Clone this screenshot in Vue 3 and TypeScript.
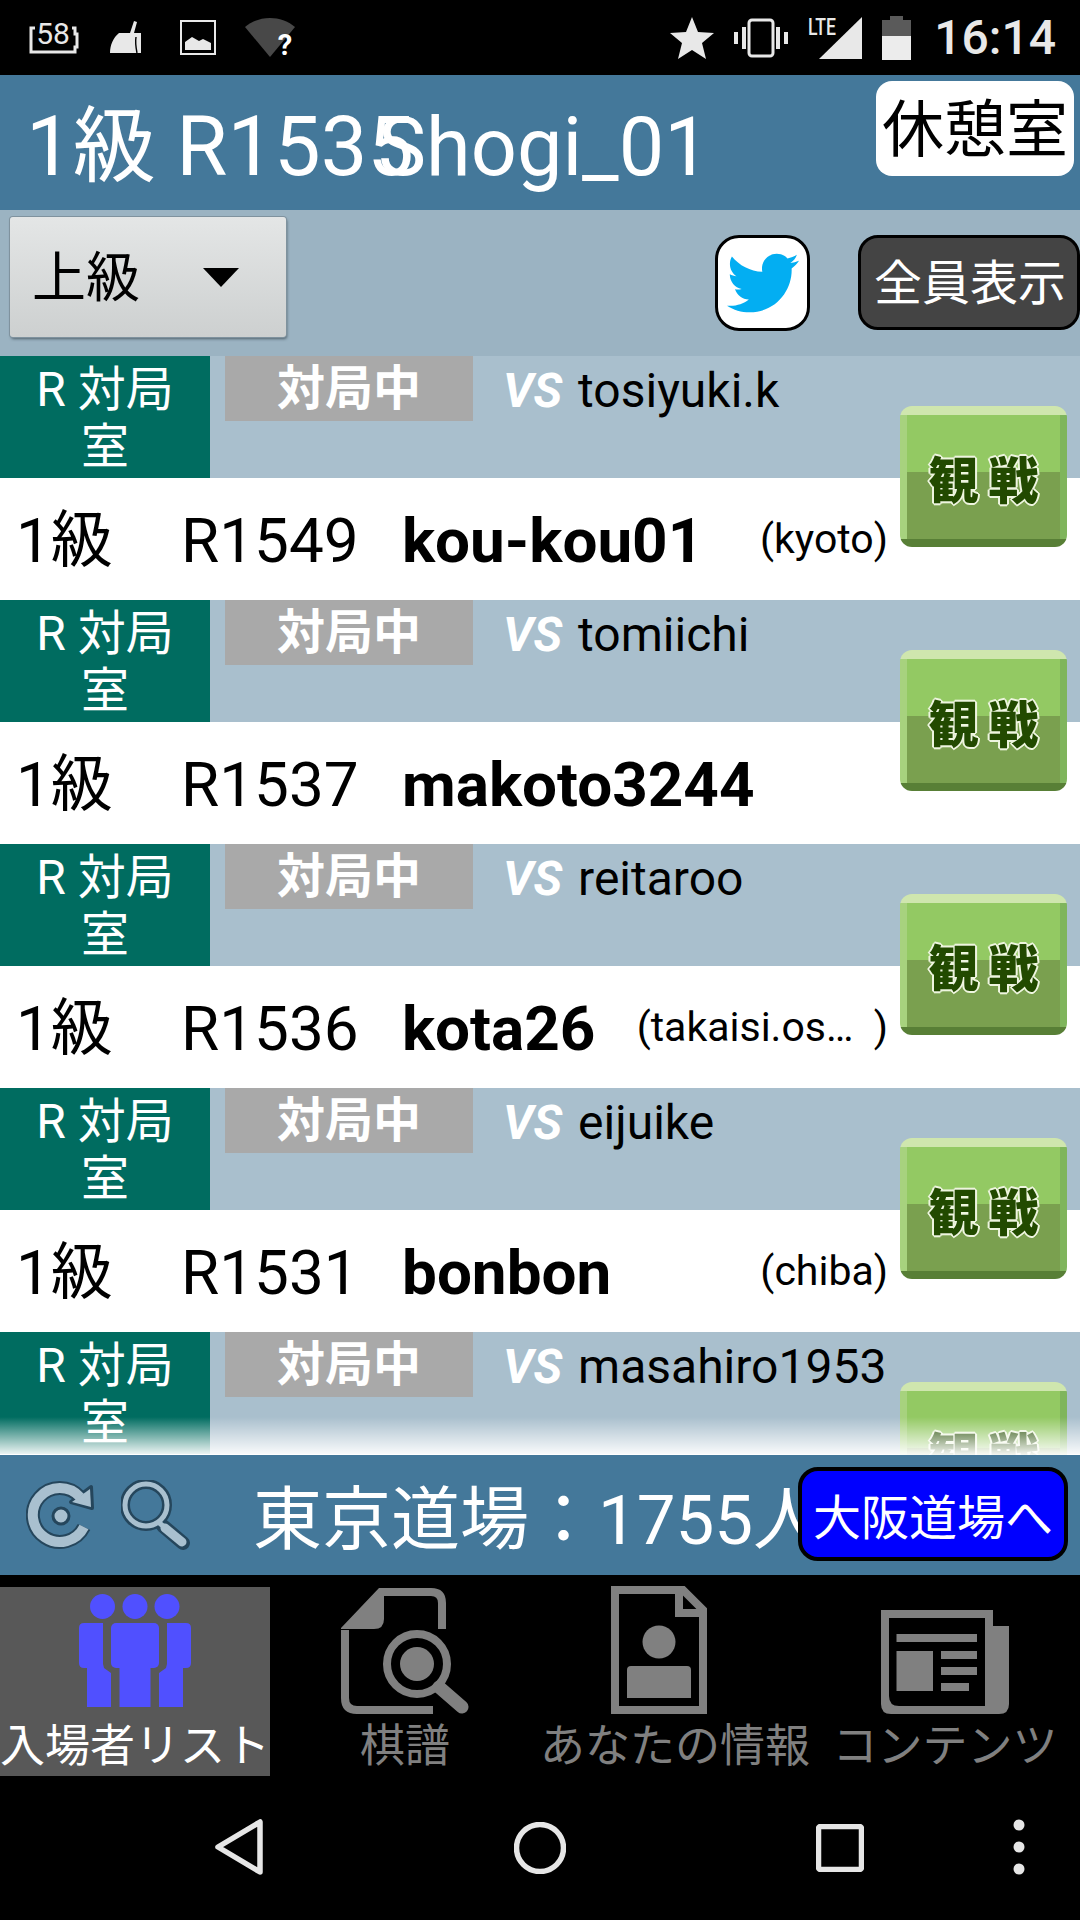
<script setup lang="ts">
interface Player {
  opponent: string
  rank: string
  rating: string
  name: string
  place: string
}

const players: Player[] = [
  { opponent: 'tosiyuki.k', rank: '1級', rating: 'R1549', name: 'kou-kou01', place: '(kyoto)' },
  { opponent: 'tomiichi', rank: '1級', rating: 'R1537', name: 'makoto3244', place: '' },
  { opponent: 'reitaroo', rank: '1級', rating: 'R1536', name: 'kota26', place: '(takaisi.os…  )' },
  { opponent: 'eijuike', rank: '1級', rating: 'R1531', name: 'bonbon', place: '(chiba)' },
  { opponent: 'masahiro1953', rank: '', rating: '', name: '', place: '' },
]
</script>

<template>
  <div class="app">
    <header class="status">
      <div class="status-group left">
        <svg class="st-cam" viewBox="0 0 49 33" width="49" height="33">
          <path d="M6 7H2V31H46V26H48V13H46V7H43" fill="none" stroke="#e8e8e8" stroke-width="3" />
          <text x="24" y="23" text-anchor="middle" class="st-num">58</text>
        </svg>
        <svg class="st-broom" viewBox="0 0 32 33" width="32" height="33">
          <path d="M24 0l3 1-3 11h7v20H0c0-8 3-15 9-20h11z" fill="#e8e8e8" />
          <path d="M27 32c-1-5-2-10-1-16" stroke="#000" stroke-width="1.4" fill="none" />
        </svg>
        <svg class="st-pic" viewBox="0 0 36 35" width="36" height="35">
          <rect x="1" y="1" width="34" height="33" fill="none" stroke="#e8e8e8" stroke-width="2" />
          <path d="M5 30V22l7-5 7 4 4-2 8 4v7z" fill="#e8e8e8" />
        </svg>
        <svg class="st-wifi" viewBox="0 0 50 40" width="50" height="40">
          <path d="M0 9C14-3 36-3 50 9L25 39z" fill="#484848" />
          <text x="40" y="37" text-anchor="middle" class="st-q">?</text>
        </svg>
      </div>
      <div class="status-group right">
        <svg viewBox="0 0 44 42" width="44" height="42">
          <path d="M22 0l6 15 16 1-12 10 4 16-14-9-14 9 4-16L0 16l16-1z" fill="#e8e8e8" />
        </svg>
        <svg viewBox="0 0 54 40" width="54" height="40">
          <rect x="15" y="2" width="24" height="36" rx="3" fill="none" stroke="#e8e8e8" stroke-width="3" />
          <rect x="8" y="9" width="4" height="22" fill="#e8e8e8" />
          <rect x="42" y="9" width="4" height="22" fill="#e8e8e8" />
          <rect x="0" y="14" width="4" height="12" fill="#e8e8e8" />
          <rect x="50" y="14" width="4" height="12" fill="#e8e8e8" />
        </svg>
        <svg viewBox="0 0 54 42" width="54" height="42">
          <text x="0" y="18" class="st-lte" textLength="28" lengthAdjust="spacingAndGlyphs">LTE</text>
          <path d="M54 0V42H11z" fill="#e8e8e8" />
        </svg>
        <svg viewBox="0 0 29 44" width="29" height="44">
          <path d="M8 0h13v4h8v16H0V4h8z" fill="#5a5a5a" />
          <rect x="0" y="20" width="29" height="24" fill="#ececec" />
        </svg>
        <span class="clock">16:14</span>
      </div>
    </header>

    <section class="title-bar">
      <h1 class="title"><span class="title-rank">1級 R1535</span><span class="title-site">Shogi_01</span></h1>
      <button class="lounge">休憩室</button>
    </section>

    <section class="toolbar">
      <div class="select">
        <span>上級</span>
        <i class="caret"></i>
      </div>
      <button class="twitter" aria-label="Twitter">
        <svg viewBox="0 0 24 24" width="72" height="72">
          <path
            fill="#03aef2"
            d="M23.954 4.569c-.885.389-1.83.654-2.825.775 1.014-.611 1.794-1.574 2.163-2.723-.951.555-2.005.959-3.127 1.184-.896-.959-2.173-1.559-3.591-1.559-2.717 0-4.92 2.203-4.92 4.917 0 .39.045.765.127 1.124C7.691 8.094 4.066 6.13 1.64 3.161c-.427.722-.666 1.561-.666 2.475 0 1.71.87 3.213 2.188 4.096-.807-.026-1.566-.248-2.228-.616v.061c0 2.385 1.693 4.374 3.946 4.827-.413.111-.849.171-1.296.171-.314 0-.615-.03-.916-.086.631 1.953 2.445 3.377 4.604 3.417-1.68 1.319-3.809 2.105-6.102 2.105-.39 0-.779-.023-1.17-.067 2.189 1.394 4.768 2.209 7.557 2.209 9.054 0 13.999-7.496 13.999-13.986 0-.209 0-.42-.015-.63.961-.689 1.8-1.56 2.46-2.548l-.047-.02z"
          />
        </svg>
      </button>
      <button class="show-all">全員表示</button>
    </section>

    <main class="list">
      <article v-for="p in players" :key="p.opponent" class="row">
        <div class="row-top">
          <div class="room">R 対局<br />室</div>
          <div class="state">対局中</div>
          <div class="versus"><b>VS</b><span>{{ p.opponent }}</span></div>
        </div>
        <div class="row-bottom">
          <span class="rank">{{ p.rank }}</span>
          <span class="rating">{{ p.rating }}</span>
          <span class="name">{{ p.name }}</span>
          <span class="place">{{ p.place }}</span>
        </div>
        <button class="watch"><span>観戦</span></button>
      </article>
      <div class="fade"></div>
    </main>

    <section class="dojo">
      <svg class="dojo-icon" viewBox="0 0 70 71" width="70" height="71">
        <path d="M54 17A27 27 0 1 0 58 47" fill="none" stroke="#25465c" stroke-width="14" />
        <path d="M45 22L65 7 66 28z" fill="#a9c0cf" stroke="#25465c" stroke-width="4" stroke-linejoin="round" />
        <path d="M54 17A27 27 0 1 0 58 47" fill="none" stroke="#a9c0cf" stroke-width="10" />
        <path d="M46 22L64 9 65 27z" fill="#a9c0cf" />
        <circle cx="35" cy="36" r="8" fill="#a9c0cf" stroke="#25465c" stroke-width="3" />
      </svg>
      <svg class="dojo-icon second" viewBox="0 0 70 71" width="70" height="71">
        <path d="M42 46L62 63" stroke="#25465c" stroke-width="14" stroke-linecap="round" />
        <circle cx="25" cy="25" r="21" fill="none" stroke="#25465c" stroke-width="10" />
        <circle cx="25" cy="25" r="21" fill="none" stroke="#a9c0cf" stroke-width="5" />
        <path d="M36 41L42 46" stroke="#a9c0cf" stroke-width="5" />
        <path d="M44 48L61 62" stroke="#a9c0cf" stroke-width="9" stroke-linecap="round" />
      </svg>
      <div class="dojo-count">東京道場：1755人</div>
      <button class="dojo-link">大阪道場へ</button>
    </section>

    <nav class="tabs">
      <div class="tab active">
        <svg viewBox="0 0 112 113" width="112" height="113" fill="#5050ff">
          <circle cx="23.5" cy="12.5" r="12.5" />
          <circle cx="56" cy="12.5" r="12.5" />
          <circle cx="88" cy="12.5" r="12.5" />
          <rect x="32" y="29" width="48" height="45" rx="5" />
          <rect x="40.5" y="60" width="31" height="53" />
          <path d="M5 29H24V70L25 74 32 79V113H8V74H5Q0 74 0 69V34Q0 29 5 29Z" />
          <path d="M107 29H88V70L87 74 80 79V113H104V74H107Q112 74 112 69V34Q112 29 107 29Z" />
        </svg>
        <span>入場者リスト</span>
      </div>
      <div class="tab">
        <svg viewBox="0 0 128 126" width="128" height="126">
          <path d="M92 122H16Q4 122 4 110V42" fill="none" stroke="#808080" stroke-width="8" />
          <path d="M0 40L38 0H90Q105 0 105 15V41H97V15Q97 8 90 8H43V31Q43 41 33 41H0Z" fill="#808080" />
          <circle cx="76" cy="76" r="30" fill="none" stroke="#808080" stroke-width="8" />
          <circle cx="76" cy="76" r="17" fill="#808080" />
          <path d="M98 99L121 119" stroke="#808080" stroke-width="13" stroke-linecap="round" />
        </svg>
        <span>棋譜</span>
      </div>
      <div class="tab info">
        <svg viewBox="0 0 96 128" width="96" height="128">
          <path d="M4 4H72L92 24V124H4Z" fill="none" stroke="#808080" stroke-width="8" />
          <path d="M64 4H72V23H90V31H64Z" fill="#808080" />
          <circle cx="48" cy="56" r="16.5" fill="#808080" />
          <path d="M20 80H76Q80 80 80 84V112H16V84Q16 80 20 80Z" fill="#808080" />
        </svg>
        <span>あなたの情報</span>
      </div>
      <div class="tab">
        <svg viewBox="0 0 128 104" width="128" height="104">
          <path
            fill="#808080"
            fill-rule="evenodd"
            d="M0 0H112V16H128V94Q128 104 118 104H10Q0 104 0 94ZM8 8V86Q8 96 18 96H104V8Z"
          />
          <path d="M15.5 24H96V32H15.5ZM15.5 41H52V81H15.5ZM60 41H96V49H60ZM60 57H96V65H60ZM60 73H88V81H60Z" fill="#808080" />
        </svg>
        <span>コンテンツ</span>
      </div>
    </nav>

    <footer class="sysnav">
      <svg viewBox="0 0 48 56" width="48" height="56" class="nav-back">
        <path d="M45 3V53L3 28Z" fill="none" stroke="#e6e6e6" stroke-width="5.5" stroke-linejoin="round" />
      </svg>
      <svg viewBox="0 0 52 52" width="52" height="52" class="nav-home">
        <circle cx="26" cy="26" r="23.5" fill="none" stroke="#e6e6e6" stroke-width="5.5" />
      </svg>
      <svg viewBox="0 0 48 48" width="48" height="48" class="nav-recent">
        <rect x="2.5" y="2.5" width="43" height="43" rx="2" fill="none" stroke="#e6e6e6" stroke-width="5.5" />
      </svg>
      <svg viewBox="0 0 12 56" width="12" height="56" class="nav-more" fill="#e6e6e6">
        <circle cx="6" cy="6" r="5.5" />
        <circle cx="6" cy="28" r="5.5" />
        <circle cx="6" cy="50" r="5.5" />
      </svg>
    </footer>
  </div>
</template>

<style>
html,
body {
  margin: 0;
  background: #000;
}
</style>

<style scoped>
.app {
  width: 1080px;
  height: 1920px;
  overflow: hidden;
  display: flex;
  flex-direction: column;
  background: #000;
  font-family: Roboto, "Noto Sans CJK JP", sans-serif;
  color: #000;
}
button {
  font-family: inherit;
  padding: 0;
  cursor: pointer;
}

/* status bar */
.status {
  height: 75px;
  flex: none;
  display: flex;
  justify-content: space-between;
  align-items: center;
  padding: 0 24px 0 29px;
  box-sizing: border-box;
}
.status svg {
  overflow: visible;
}
.status-group {
  display: flex;
  align-items: center;
}
.status-group.right {
  gap: 20px;
}
.st-broom {
  margin-left: 32px;
}
.st-pic {
  margin-left: 38px;
}
.st-wifi {
  margin-left: 29px;
}
.st-num {
  font: 400 30px Roboto, sans-serif;
  fill: #e8e8e8;
}
.st-q {
  font: 700 29px Roboto, sans-serif;
  fill: #fff;
}
.st-lte {
  font: 500 24px Roboto, sans-serif;
  fill: #e8e8e8;
}
.clock {
  font-size: 48px;
  font-weight: 500;
  color: #e8e8e8;
  margin-left: 3px;
  line-height: 1;
}

/* title */
.title-bar {
  height: 135px;
  flex: none;
  background: #44789a;
  position: relative;
  display: flex;
  align-items: center;
  justify-content: space-between;
  box-sizing: border-box;
  padding: 0 6px 0 26px;
}
.title {
  margin: 0;
  display: flex;
  align-items: baseline;
  font-size: 83px;
  font-weight: 400;
  color: #fff;
  white-space: nowrap;
  line-height: 90px;
  padding-top: 10px;
}
.title-rank {
  width: 352px;
}
.title-site {
  font-size: 81px;
}
.lounge {
  align-self: flex-start;
  width: 198px;
  height: 95px;
  margin-top: 6px;
  padding-top: 5px;
  background: #fff;
  border: none;
  border-radius: 16px;
  font-size: 62px;
  line-height: 90px;
  color: #000;
}

/* toolbar */
.toolbar {
  height: 146px;
  flex: none;
  background: #9bb3c2;
  display: flex;
  box-sizing: border-box;
  padding: 7px 0 0 10px;
  align-items: flex-start;
}
.select {
  width: 276px;
  height: 120px;
  box-sizing: border-box;
  display: flex;
  align-items: center;
  padding: 0 0 8px 22px;
  font-size: 54px;
  border-radius: 3px;
  background: linear-gradient(#e4e6e6, #cdd0d0);
  box-shadow: 0 0 0 1px #7f929e, 1px 2px 3px #4f606b;
}
.caret {
  width: 0;
  height: 0;
  margin: 8px 0 0 63px;
  border-left: 18px solid transparent;
  border-right: 18px solid transparent;
  border-top: 19px solid #000;
}
.twitter {
  width: 95px;
  height: 96px;
  margin: 18px 0 0 429px;
  background: #fff;
  border: 3px solid #000;
  border-radius: 24px;
  display: flex;
  align-items: center;
  justify-content: center;
}
.show-all {
  width: 222px;
  height: 95px;
  margin: 18px 0 0 48px;
  padding: 0 0 7px 2px;
  flex: none;
  box-sizing: border-box;
  background: #444;
  color: #fff;
  border: 3px solid #000;
  border-radius: 20px;
  font-size: 48px;
  white-space: nowrap;
}

/* list */
.list {
  height: 1099px;
  flex: none;
  overflow: hidden;
  position: relative;
  background: #fff;
}
.row {
  position: relative;
  height: 244px;
}
.row-top {
  height: 122px;
  background: #a9bfcd;
  display: flex;
  align-items: flex-start;
}
.room {
  width: 210px;
  height: 122px;
  flex: none;
  background: #006c60;
  color: #fff;
  text-align: center;
  font-size: 48px;
  line-height: 57px;
  padding-top: 5px;
  box-sizing: border-box;
  white-space: nowrap;
}
.state {
  width: 248px;
  height: 65px;
  flex: none;
  margin-left: 15px;
  background: #a9a9a9;
  color: #fff;
  text-align: center;
  font-size: 48px;
  font-weight: 700;
  line-height: 65px;
}
.versus {
  display: flex;
  align-items: baseline;
  gap: 16px;
  margin-left: 30px;
  font-size: 48px;
  line-height: 69px;
  white-space: nowrap;
}
.versus b {
  color: #fff;
  font-style: italic;
  font-weight: 700;
}
.row-bottom {
  height: 122px;
  background: #fff;
  display: flex;
  align-items: center;
  padding-left: 16px;
  box-sizing: border-box;
  white-space: nowrap;
}
.rank,
.rating,
.name {
  flex: none;
  font-size: 62px;
  line-height: 70px;
  margin-top: 3px;
}
.rank {
  width: 165px;
}
.rating {
  width: 221px;
}
.name {
  font-weight: 700;
}
.place {
  margin-left: auto;
  margin-right: 192px;
  font-size: 41px;
  line-height: 60px;
  white-space: pre;
}
.watch {
  position: absolute;
  left: 900px;
  top: 50px;
  width: 167px;
  height: 141px;
  padding-top: 10px;
  border: none;
  border-radius: 12px;
  background:
    linear-gradient(#cfe6ae 0, #cfe6ae 9px, transparent 9px),
    linear-gradient(transparent 133px, #587f36 133px),
    linear-gradient(90deg, #a7d27e 0, #a7d27e 7px, transparent 7px, transparent 160px, #7fb55c 160px),
    linear-gradient(#93c963 0, #93c963 47%, #7aa04f 47%, #7aa04f 100%);
  color: #224a00;
  font-size: 50px;
  font-weight: 900;
  letter-spacing: 10px;
  text-indent: 10px;
  line-height: 1;
  white-space: nowrap;
  text-shadow: -2px 0 0 #eef5df, 2px 0 0 #eef5df, 0 -2px 0 #eef5df, 0 2px 0 #eef5df, -1px -1px 0 #eef5df, 1px 1px 0 #eef5df, -1px 1px 0 #eef5df, 1px -1px 0 #eef5df;
}
.fade {
  position: absolute;
  left: 0;
  right: 0;
  bottom: 0;
  height: 38px;
  background: linear-gradient(rgba(255, 255, 255, 0), rgba(255, 255, 255, 0.95));
}

/* dojo bar */
.dojo {
  height: 120px;
  flex: none;
  position: relative;
  background: #44789a;
  display: flex;
  align-items: center;
  padding-left: 26px;
  box-sizing: border-box;
  overflow: hidden;
}
.dojo-icon {
  flex: none;
  margin-top: 1px;
}
.dojo-icon.second {
  margin-left: 25px;
}
.dojo-count {
  margin: -2px 0 0 62px;
  font-size: 69px;
  color: #fff;
  white-space: nowrap;
}
.dojo-link {
  position: absolute;
  left: 798px;
  top: 12px;
  width: 270px;
  height: 94px;
  box-sizing: border-box;
  background: #0000ff;
  color: #fff;
  border: 4px solid #000;
  border-radius: 20px;
  font-size: 48px;
  white-space: nowrap;
}

/* tabs */
.tabs {
  flex: none;
  height: 201px;
  padding-top: 12px;
  box-sizing: border-box;
  display: grid;
  grid-template-columns: repeat(4, 270px);
  background: #000;
}
.tab {
  display: flex;
  flex-direction: column;
  align-items: center;
  justify-content: flex-end;
  color: #808080;
  font-size: 45px;
  line-height: 58px;
  white-space: nowrap;
  position: relative;
}
.tab svg {
  position: absolute;
  bottom: 62px;
}
.tab.active {
  background: #585858;
  color: #fff;
}
.tab.active svg {
  bottom: 69px;
}
.tab.info svg {
  margin-right: 32px;
}

/* system navigation */
.sysnav {
  flex: 1;
  position: relative;
}
.sysnav svg {
  position: absolute;
}
.nav-back {
  left: 215px;
  top: 43px;
}
.nav-home {
  left: 514px;
  top: 46px;
}
.nav-recent {
  left: 816px;
  top: 48px;
}
.nav-more {
  left: 1013px;
  top: 43px;
}
</style>
